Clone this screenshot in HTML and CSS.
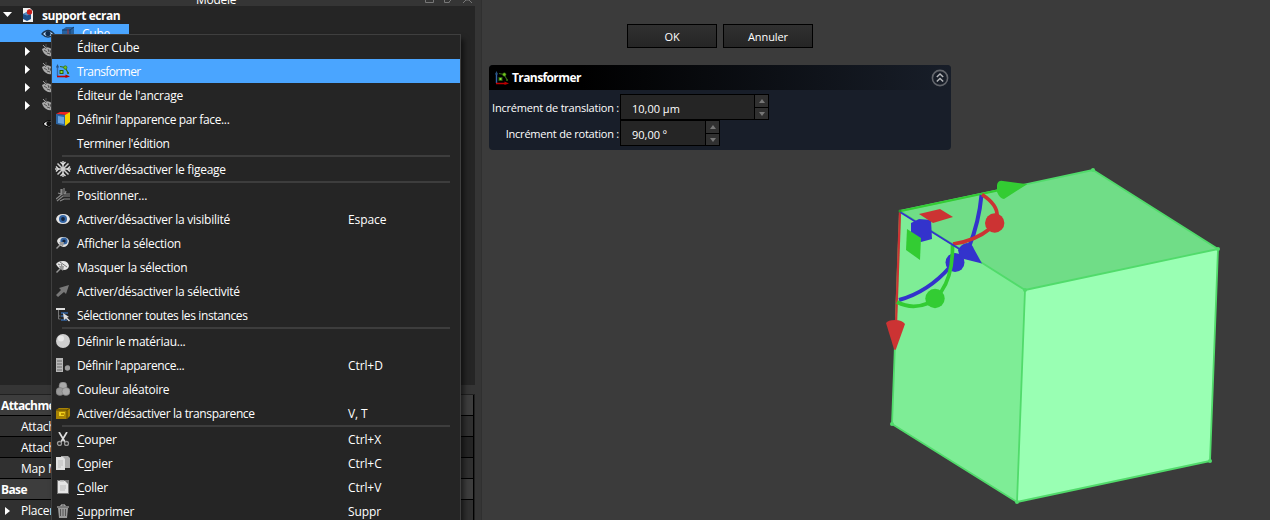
FILE: index.html
```html
<!DOCTYPE html>
<html lang="fr">
<head>
<meta charset="utf-8">
<title>support ecran</title>
<link rel="stylesheet" href="styles.css">
</head>
<body>
<svg class="defs" width="0" height="0">
  <symbol id="transform" viewBox="0 0 14 14"><path d="M1.500 2v10" stroke="#3466a8" stroke-width="1.400"/><path d="M0 3.500L1.500 0 3 3.500z" fill="#28507f"/><path d="M1 12.500h9" stroke="#c00000" stroke-width="1.600"/><path d="M9.500 10.500l4.500 2-4.500 1.500z" fill="#b80000"/><path d="M4 2.500l5 1 3.500 6" fill="none" stroke="#356814" stroke-width="1.200"/><rect x="4" y="6.500" width="3" height="3" fill="#8ae234" stroke="#28600c"/><circle cx="9.300" cy="3.500" r="1.700" fill="#73c421" stroke="#28600c" stroke-width=".6"/><circle cx="12" cy="9" r="1" fill="#356814"/></symbol>
  <symbol id="hidden" viewBox="0 0 14 14"><path d="M0 5q4-3 8-1l6 4q-1 5-8 4Q1 10 0 5z" fill="#aaa"/><path d="M1 1l3 4M4 0v4M2 6l3 2M6 5l1 3M8 6l1 3M5 9l3 1" stroke="#555" stroke-width="1"/><path d="M1 1l3 3" stroke="#999"/></symbol>
</svg>
<div class="app">
  <section class="side">
    <div class="dock"><span class="dock-title">Modèle</span>
      <svg class="dock-buttons" width="50" height="6"><path d="M.5 0v2.500h8V0M19.500 0v2.500h5M24 2l2-2M38 3l3-3 3 0 3 3" fill="none" stroke="#777"/></svg></div>
    <div class="tree">
      <div class="root"><svg width="10" height="6"><path d="M0 0h9L4.500 5z" fill="#fff"/></svg>
        <svg class="doc" width="12" height="14"><path d="M1 0h7l3 3v11H1z" fill="#f1f1f1"/><path d="M1 6l4-2 4 2v5l-4 2-4-2z" fill="#1e4e88"/><path d="M1 6l4 1.500L9 6 5 4z" fill="#5a8fc7"/><circle cx="7.500" cy="4" r="2.700" fill="#c9211e"/></svg><b>support ecran</b></div>
      <div class="cube-row"><svg width="14" height="14"><path d="M1 8q6-7 12 0-6 6-12 0z" fill="#b9dcff" stroke="#1c3550" stroke-width="1.300"/><circle cx="7" cy="7.500" r="2.600" fill="#102b4a"/></svg>
        <svg width="14" height="14"><path d="M1 4l4-3h8v9l-4 4H1z" fill="#28629f"/><path d="M1 4h8v10M9 4l4-3" fill="none" stroke="#153c69"/><path d="M7 3v5" stroke="#a33"/></svg><span>Cube</span></div>
      <div class="node"><svg width="6" height="9"><path d="M0 0l5 4.500L0 9z" fill="#fff"/></svg><svg width="14" height="14"><use href="#hidden"/></svg></div>
      <div class="node"><svg width="6" height="9"><path d="M0 0l5 4.500L0 9z" fill="#fff"/></svg><svg width="14" height="14"><use href="#hidden"/></svg></div>
      <div class="node"><svg width="6" height="9"><path d="M0 0l5 4.500L0 9z" fill="#fff"/></svg><svg width="14" height="14"><use href="#hidden"/></svg></div>
      <div class="node"><svg width="6" height="9"><path d="M0 0l5 4.500L0 9z" fill="#fff"/></svg><svg width="14" height="14"><use href="#hidden"/></svg></div>
      <div class="node leaf"><svg width="14" height="14"><path d="M1 8q6-7 12 0-6 6-12 0z" fill="#eee" stroke="#000"/><circle cx="7" cy="7.500" r="2.600" fill="#111"/></svg></div>
    </div>
    <div class="props">
      <div class="prop group">Attachment</div>
      <div class="prop"><span>Attacher</span></div>
      <div class="prop alt"><span>Attachment</span></div>
      <div class="prop"><span>Map Mode</span></div>
      <div class="prop group">Base</div>
      <div class="prop"><svg width="5" height="8"><path d="M0 0l5 4-5 4z" fill="#fff"/></svg><span>Placement</span></div>
    </div>
  </section>
  <main class="view">
    <div class="buttons"><button>OK</button><button>Annuler</button></div>
    <section class="task">
      <header><svg width="14" height="14"><use href="#transform"/></svg><b>Transformer</b>
        <svg class="collapse" width="18" height="18"><circle cx="9" cy="9" r="7.600" fill="none" stroke="#62656b" stroke-width="1.600"/><path d="M5.800 8L9 5l3.200 3M5.800 12.500l3.200-3 3.200 3" fill="none" stroke="#b5b7ba" stroke-width="1.500"/></svg></header>
      <div class="form">
        <div class="field"><label>Incrément de translation :</label><div class="spin"><span>10,00 µm</span><div class="steps"><i><svg width="6" height="4"><path d="M0 4l3-4 3 4z" fill="#777"/></svg></i><i><svg width="6" height="4"><path d="M0 0h6L3 4z" fill="#777"/></svg></i></div></div></div>
        <div class="field"><label>Incrément de rotation :</label><div class="spin short"><span>90,00 º</span><div class="steps"><i><svg width="6" height="4"><path d="M0 4l3-4 3 4z" fill="#777"/></svg></i><i><svg width="6" height="4"><path d="M0 0h6L3 4z" fill="#777"/></svg></i></div></div></div>
      </div>
    </section>
    <svg class="scene" width="350" height="350" viewBox="880 160 350 350">
      <path d="M900 211L1093 170 1218 249 1025 290z" fill="#70dd87"/>
      <path d="M900 211L1025 290 1017 502 892 424z" fill="#7eed96"/>
      <path d="M1025 290L1218 249 1210 461 1017 502z" fill="#99ffb3"/>
      <path d="M900 211L1093 170 1218 249 1210 461 1017 502 892 424zM900 211L1025 290 1218 249M1025 290L1017 502" fill="none" stroke="#51db6b" stroke-width="1.800" stroke-linejoin="round"/>
      <g fill="#51db6b"><circle cx="1093" cy="170" r="2"/><circle cx="1218" cy="249" r="2"/><circle cx="1210" cy="461" r="2"/><circle cx="1017" cy="502" r="2"/><circle cx="892" cy="424" r="2"/><circle cx="1025" cy="290" r="2"/></g>
      <path d="M901 211L1000 190" stroke="#33cc33" stroke-width="2.200"/><path d="M900 212L896 323" stroke="#cc3333" stroke-width="2.300"/>
      <path d="M981.500 195Q979 222 969 247M899 300Q928 292 950 267" fill="none" stroke="#3333cc" stroke-width="4"/>
      <circle cx="955" cy="262.500" r="9.500" fill="#3333cc"/>
      <path d="M958 250Q961 244 967 243Q972 243 974 249L982 263.500 960 258z" fill="#3333cc"/>
      <path d="M982 194.500Q998 205 997 216M991 228Q975 241 953 244" fill="none" stroke="#cc3333" stroke-width="3.700"/>
      <circle cx="994.700" cy="223" r="9.700" fill="#cc3333"/>
      <path d="M952.500 245Q953 275 941 292M897 302Q912 310 929 303" fill="none" stroke="#33cc33" stroke-width="3.700"/>
      <circle cx="935" cy="298.500" r="9.700" fill="#33cc33"/>
      <path d="M900 212L961 250" stroke="#3333cc" stroke-width="2"/>
      <path d="M911 223l8-4 12 1 1 19-11 3-10-8z" fill="#3333cc"/>
      <path d="M919 214l21-5 13 8-20 6z" fill="#cc3333"/><path d="M907 229l14 9-1 22-14-10z" fill="#33cc33"/>
      <path d="M997 185q1-5 6-4l23 3q2 1 0 1l-22 14q-4 0-7-7z" fill="#33cc33"/>
      <path d="M886 323q2-3 9-3t10 4l-9 25q-1 2-2 0z" fill="#cc3333"/>
      <circle cx="900" cy="211" r="1.500" fill="#2a972c"/>
    </svg>
  </main>

  <div class="menu" role="menu">
    <div class="item"><i class="icon"></i><span>Éditer Cube</span></div>
    <div class="item selected"><svg class="icon" viewBox="0 0 14 14"><use href="#transform"/></svg><span>Transformer</span></div>
    <div class="item"><i class="icon"></i><span>Éditeur de l'ancrage</span></div>
    <div class="item tight"><svg class="icon" viewBox="0 0 14 14"><path d="M0 2l4-2h10l-4 3z" fill="#e22"/><path d="M0 2l9 1v11L0 12z" fill="#2c65a3"/><path d="M2 4l6 1v7l-6-1z" fill="#6aa2dc"/><path d="M9 3l5-3v10l-5 4z" fill="#f4d400"/></svg><span>Définir l'apparence par face...</span></div>
    <div class="item tight"><i class="icon"></i><span>Terminer l'édition</span></div>
    <hr>
    <div class="item"><svg class="icon wide" viewBox="0 0 16 16"><path d="M8 0v16M0 8h16M2.500 2.500l11 11M13.500 2.500l-11 11" fill="none" stroke="#ccc" stroke-width="1.500"/><path d="M5.500 1L8 3.500 10.500 1M5.500 15L8 12.500l2.500 2.500M1 5.500L3.500 8 1 10.500M15 5.500L12.500 8l2.500 2.500" fill="none" stroke="#ddd" stroke-width="1.400"/></svg><span>Activer/désactiver le figeage</span></div>
    <hr>
    <div class="item"><svg class="icon" viewBox="0 0 14 14"><path d="M5 1v6l-5 4M8 0v6h6M6 1v6M14 8H7l-6 5M14 11H8l-4 2M2 5l3 1M10 3l-1 3" fill="none" stroke="#888" stroke-width="1.200"/></svg><span>Positionner...</span></div>
    <div class="item"><svg class="icon" viewBox="0 0 14 14"><path d="M0 7q1-5 7-5t7 5q-1 5-7 5T0 7z" fill="#e5e5e5"/><circle cx="7" cy="7" r="4" fill="#3465a4"/><circle cx="7" cy="7" r="1.900" fill="#15243b"/></svg><span>Activer/désactiver la visibilité</span><kbd>Espace</kbd></div>
    <div class="item"><svg class="icon" viewBox="0 0 14 14"><path d="M1 5Q2 1 7 1q5 0 6 4-1 6-6 6Q2 9 1 5z" fill="#e5e5e5"/><circle cx="8" cy="5" r="3.600" fill="#3465a4"/><circle cx="8" cy="5" r="1.600" fill="#15243b"/><path d="M0 12l4-4-1-2h5L7 11 5 9l-4 4z" fill="#999"/></svg><span>Afficher la sélection</span></div>
    <div class="item"><svg class="icon" viewBox="0 0 14 14"><path d="M0 4Q2 1 7 1q5 0 6 5-1 4-5 4Q2 9 0 4z" fill="#e5e5e5"/><path d="M4 2l7 5M2 4l2 1M5 4l1 2" stroke="#777"/><path d="M0 12l4-4-1-2h5L7 11 5 9l-4 4z" fill="#999"/></svg><span>Masquer la sélection</span></div>
    <div class="item"><svg class="icon" viewBox="0 0 14 14"><path d="M0 11l5-5-2-2 10-3-3 9-2-2-6 5z" fill="#777"/></svg><span>Activer/désactiver la sélectivité</span></div>
    <div class="item tight"><svg class="icon" viewBox="0 0 14 14"><path d="M0 1h9" stroke="#ddd" stroke-width="2"/><path d="M2.500 2v6h2M2.500 8v3h2" fill="none" stroke="#777"/><path d="M5 5h7M5 12h6M5 8h3" stroke="#3465a4" stroke-width="1.500"/><path d="M7 5l6 4-2 .5 3 3-1 1-3-3-2 1.500z" fill="#ddd"/></svg><span>Sélectionner toutes les instances</span></div>
    <hr>
    <div class="item"><svg class="icon" viewBox="0 0 14 14"><circle cx="7" cy="7" r="7" fill="#cfcfcf"/><circle cx="5" cy="4.500" r="3" fill="#e8e8e8"/></svg><span>Définir le matériau...</span></div>
    <div class="item tight"><svg class="icon" viewBox="0 0 14 14"><path d="M0 0h7v14H0z" fill="#b7b7b7"/><path d="M1 3h5M1 6h5M1 9h5M1 12h5" stroke="#666"/><circle cx="11.500" cy="10" r="2.700" fill="#999"/></svg><span>Définir l'apparence...</span><kbd>Ctrl+D</kbd></div>
    <div class="item"><svg class="icon" viewBox="0 0 14 14"><g stroke="#777" stroke-width=".6"><circle cx="7" cy="4" r="4" fill="#aaa"/><circle cx="4" cy="9.500" r="4" fill="#999"/><circle cx="10" cy="9.500" r="4" fill="#aaa"/></g></svg><span>Couleur aléatoire</span></div>
    <div class="item tight"><svg class="icon" viewBox="0 0 14 14"><path d="M0 4l3-2h11v8l-3 3H0z" fill="#a98305"/><path d="M0 4h11v9M11 4l3-2" fill="none" stroke="#5b4600"/><path d="M3 6h6l-1 4H3z" fill="#f1d31d"/><path d="M5 7h3v2H5z" fill="#b88c00"/></svg><span>Activer/désactiver la transparence</span><kbd>V, T</kbd></div>
    <hr>
    <div class="item"><svg class="icon" viewBox="0 0 14 14"><path d="M3 0l6 10M11 0L5 10" stroke="#ddd" stroke-width="1.700"/><circle cx="3.500" cy="11.500" r="2" fill="none" stroke="#999" stroke-width="1.300"/><circle cx="10.500" cy="11.500" r="2" fill="none" stroke="#999" stroke-width="1.300"/></svg><span><u>C</u>ouper</span><kbd>Ctrl+X</kbd></div>
    <div class="item"><svg class="icon" viewBox="0 0 14 14"><path d="M5 0h7l2 2v10H5z" fill="#aaa"/><path d="M0 1h7l2 2v11H0z" fill="#e1e1e1"/><path d="M2 5h5M2 7h5M2 9h5M2 11h3" stroke="#bbb"/></svg><span>C<u>o</u>pier</span><kbd>Ctrl+C</kbd></div>
    <div class="item"><svg class="icon" viewBox="0 0 14 14"><path d="M1 0h12v14H1z" fill="#777"/><path d="M2 1h7l3 3v9H2z" fill="#e5e5e5"/><path d="M4 0h4v1.500H4z" fill="#aaa"/><path d="M4 6h6M4 8h6M4 10h5" stroke="#bbb"/></svg><span><u>C</u>oller</span><kbd>Ctrl+V</kbd></div>
    <div class="item"><svg class="icon" viewBox="0 0 14 14"><path d="M2 4h10l-1 10H3z" fill="#999"/><path d="M1 3h12M5 2V1h4v1" fill="none" stroke="#ccc"/><path d="M4.500 5v7M7 5v7M9.500 5v7" stroke="#555"/></svg><span><u>S</u>upprimer</span><kbd>Suppr</kbd></div>
  </div>
</div>
</body>
</html>
```
FILE: styles.css
```css
* { box-sizing: border-box; }
body { margin: 0; overflow: hidden; background: #3b3b3b; color: #fff; font: 12px/18px "Open Sans", "Noto Sans", sans-serif; letter-spacing: -.25px; }
svg { display: block; flex: none; }
.defs { position: absolute; }
.app { position: relative; display: flex; width: 1270px; height: 520px; overflow: hidden; }
.side { width: 482px; flex: none; background: #353535; border-right: 1px solid #303030; }
.dock { height: 6px; display: flex; padding-left: 196px; overflow: hidden; }
.dock-title { width: 229px; margin-top: -8px; line-height: 16px; }
.tree { width: 475px; height: 379px; background: #252525; white-space: nowrap; }
.root { height: 18px; display: flex; align-items: center; padding-left: 3px; }
.doc { margin: 0 8px 0 9px; }
.root b { letter-spacing: -.45px; padding-top: 2px; }
.cube-row { width: 129px; height: 18px; padding-left: 41px; display: flex; align-items: center; gap: 6px; background: #4aa5ff; }
.cube-row span { margin-left: 1px; padding-top: 2px; }
.node { height: 18px; display: flex; align-items: center; gap: 11px; padding-left: 25px; }
.leaf { padding-left: 42px; }
.props { width: 475px; height: 127px; margin-top: 9px; border: solid #202020; border-width: 1px 1px 0 0; }
.prop { width: 474px; height: 21px; display: flex; align-items: center; padding: 2px 0 0 21px; border-right: 1px solid #000; border-bottom: 1px solid #000; background: #303030; }
.prop.alt { background: #252525; }
.prop.group { padding-left: 1px; background: #3d3d3d; font-weight: 700; letter-spacing: -.6px; }
.prop svg { margin: 0 11px 0 -16px; }
.view { flex: 1; padding: 24px 0 0 7px; }
.buttons { display: flex; gap: 6px; padding-left: 138px; height: 24px; }
button { width: 90px; height: 24px; padding: 1px 0 0; border: 1px solid #000; color: #fff; background: linear-gradient(#303030,#252525); font: inherit; font-size: 11px; letter-spacing: -.1px; }
.task { width: 462px; height: 85px; margin-top: 17px; border-radius: 4px; overflow: hidden; background: #181e29; }
.task header { height: 25px; display: flex; align-items: center; padding: 0 2px 0 6px; background: linear-gradient(90deg,#000 0,#000 20%,#181e29 100%); }
.task header b { margin-left: 3px; padding-top: 1px; letter-spacing: -.6px; }
.collapse { margin-left: auto; }
.form { padding-top: 4px; }
.field { height: 26px; display: flex; align-items: center; }
.field label { width: 131px; text-align: right; white-space: nowrap; padding: 1px 1px 0 0; font-size: 11px; letter-spacing: -.22px; }
.spin { width: 149px; height: 26px; display: flex; align-items: center; border: 1px solid #000; background: #252525; }
.spin.short { width: 100px; }
.spin > span { flex: 1; padding: 3px 0 0 11px; font-size: 11px; letter-spacing: 0; }
.steps { width: 14px; height: 24px; border-left: 1px solid #000; }
.steps i { height: 12px; display: flex; align-items: center; justify-content: center; background: #303030; }
.steps i + i { border-top: 1px solid #000; }
.scene { margin: 10px 0 0 391px; }
.menu { position: absolute; left: 51px; top: 34px; width: 410px; height: 520px; border: 1px solid #3f3f3f; background: #252525; box-shadow: 3px 5px 5px #0008; }
.item { height: 24px; display: flex; align-items: center; padding-left: 4px; white-space: nowrap; }
.tight { letter-spacing: -.37px; }
.item.selected { background: #4aa5ff; letter-spacing: -.6px; }
.icon { width: 14px; height: 14px; margin-right: 7px; }
.icon.wide { width: 16px; height: 16px; margin: 0 6px 0 -1px; }
.item > span { width: 271px; padding-top: 2px; }
.item kbd { font: inherit; padding-top: 2px; letter-spacing: -.1px; }
hr { width: 388px; height: 2px; margin: 0 0 0 10px; border: 0; background: #3d3d3d; }
u { text-underline-offset: 2px; }
```
